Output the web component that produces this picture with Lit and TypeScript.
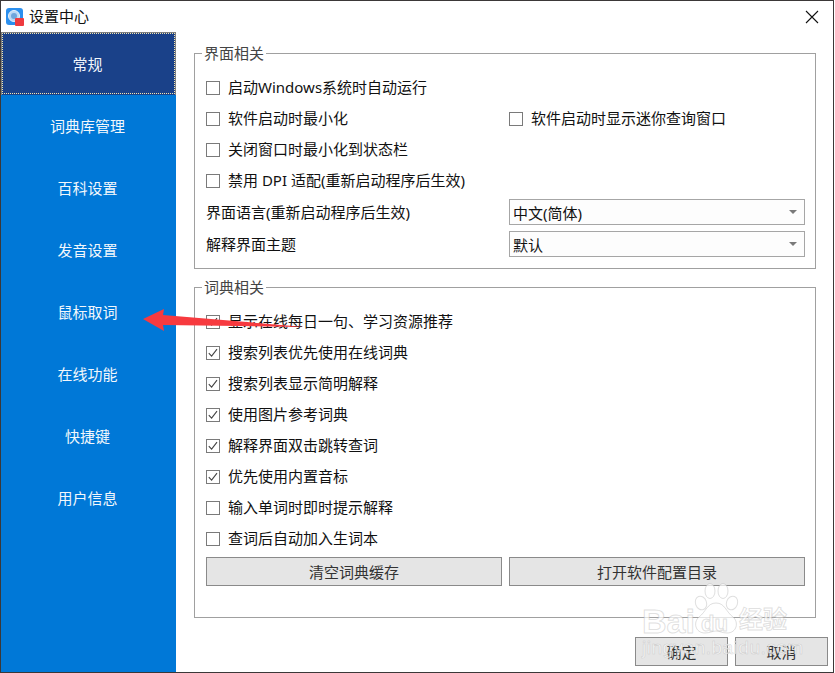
import { LitElement, html, css, svg } from "lit";
import { customElement } from "lit/decorators.js";

const NAV = ["常规", "词典库管理", "百科设置", "发音设置", "鼠标取词", "在线功能", "快捷键", "用户信息"];
const DICT: [string, boolean][] = [
  ["显示在线每日一句、学习资源推荐", true],
  ["搜索列表优先使用在线词典", true],
  ["搜索列表显示简明解释", true],
  ["使用图片参考词典", true],
  ["解释界面双击跳转查词", true],
  ["优先使用内置音标", true],
  ["输入单词时即时提示解释", false],
  ["查词后自动加入生词本", false],
];

@customElement("app-root")
export class AppRoot extends LitElement {
  static styles = css`
    :host { display: block; width: 835px; height: 673px; background: #fff;
      font-family: "Noto Sans", "Noto Sans CJK SC", sans-serif; font-size: 15px; color: #111; overflow: hidden; }
    .win { position: relative; box-sizing: border-box; width: 834px; height: 673px; border: 1px solid #3b3838;
      display: flex; flex-direction: column; background: #fff; }
    .title { height: 31px; flex: none; display: flex; align-items: center; gap: 5px; padding-left: 5px; }
    .title span { font-size: 15px; line-height: 20px; position: relative; top: -1px; }
    .close { margin-left: auto; margin-right: 14px; display: block; }
    .body { flex: 1; display: flex; min-height: 0; }
    .side { width: 175px; flex: none; background: #0078d7; display: flex; flex-direction: column; }
    .nav { height: 62px; display: flex; align-items: center; justify-content: center; color: #f2f7fc; box-sizing: border-box; flex: none; padding: 0 2px 2px 0; }
    .nav.on { height: 63px; background: #1a4189; border: 1px solid #7f7f7f; border-bottom: none; outline: 1px dotted #f5e6b0; outline-offset: -2px; }
    .main { flex: 1; padding: 11px 0 0 18px; display: flex; flex-direction: column; }
    fieldset { margin: 0; width: 622px; box-sizing: border-box; border: 1px solid #a0a0a0; padding: 8px 10px 9px 11px; min-inline-size: 0; }
    fieldset + fieldset { margin-top: 8px; padding-bottom: 31px; }
    legend { padding: 0 2px; margin-left: -4px; line-height: 20px; color: #444; font-size: 15px; }
    .grid { display: grid; grid-template-columns: 303px 296px; }
    .row { height: 31px; display: flex; align-items: center; gap: 8px; white-space: nowrap; }
    .row.tall { height: 32px; gap: 0; }
    .box { width: 14px; height: 14px; box-sizing: border-box; border: 1px solid #7a7a7a; background: #fff; flex: none; display: block; position: relative; top: 1px; }
    .select { width: 296px; height: 26px; box-sizing: border-box; border: 1px solid #a6a6a6; background: #fdfdfd;
      display: flex; align-items: center; padding: 0 3px; position: relative; top: 1px; }
    .caret { margin-left: auto; width: 0; height: 0; border: 4px solid transparent; border-top: 4px solid #7a7a7a; border-bottom: none; margin-right: 4px; }
    .btns { display: flex; gap: 7px; margin-top: 4px; }
    .btn { height: 29px; box-sizing: border-box; background: #e5e5e5; border: 1px solid #8a8a8a; display: flex; align-items: center; justify-content: center; color: #333; }
    .btns .btn { width: 296px; }
    .foot { display: flex; justify-content: flex-end; gap: 7px; margin-top: 19px; padding-right: 5px; }
    .foot .btn { width: 93px; }
    .arrow { position: absolute; left: 0; top: 0; pointer-events: none; }
    .mark { position: absolute; left: 640px; top: 575px; width: 160px; height: 80px; pointer-events: none; font-family: "Liberation Sans", sans-serif; }
    .mark svg { position: absolute; left: 51px; top: 7px; }
    .bd, .zh, .url { position: absolute; white-space: nowrap; color: rgba(255,255,255,.7); -webkit-text-stroke: 1px rgba(175,175,175,.4); }
    .bd { left: 1px; top: 27px; font-size: 34px; line-height: 36px; font-weight: 700; }
    .du { left: 60px; top: 36px; font-size: 22px; line-height: 24px; }
    .zh { left: 98px; top: 26px; font-size: 24px; line-height: 32px; font-family: "Noto Sans CJK SC", sans-serif; font-weight: 700; }
    .url { left: 1px; top: 63px; font-size: 19px; line-height: 18px; letter-spacing: .5px; -webkit-text-stroke: .6px rgba(175,175,175,.5); }
  `;

  private check(on: boolean) {
    return html`<svg class="box" viewBox="0 0 12 12" width="14" height="14">
      ${on ? svg`<path d="M1.8 6.2 4.6 9.2 10 2.2" fill="none" stroke="#444" stroke-width="1.1" />` : ""}
    </svg>`;
  }
  private row(t: string, on = false) {
    return html`<div class="row">${this.check(on)}<span>${t}</span></div>`;
  }

  render() {
    return html`<div class="win">
      <div class="title">
        <svg width="18" height="18" viewBox="0 0 18 18">
          <rect width="17" height="17" rx="3" fill="#2b8fee" />
          <circle cx="8" cy="8" r="5.5" fill="#b9d8f5" stroke="#e8f3fc" stroke-width="1" />
          <circle cx="8" cy="8" r="3" fill="#6ea6dc" />
          <rect x="9" y="10" width="9" height="8" rx="1" fill="#ee3a3f" />
        </svg>
        <span>设置中心</span>
        <svg class="close" width="14" height="14" viewBox="0 0 14 14"><path d="M1 1 13 13M13 1 1 13" stroke="#111" stroke-width="1.1" /></svg>
      </div>
      <div class="body">
        <div class="side">
          ${NAV.map((n, i) => html`<div class="nav ${i === 0 ? "on" : ""}">${n}</div>`)}
        </div>
        <div class="main">
          <fieldset>
            <legend>界面相关</legend>
            <div class="grid">
              ${this.row("启动Windows系统时自动运行")}<div></div>
              ${this.row("软件启动时最小化")}${this.row("软件启动时显示迷你查询窗口")}
              ${this.row("关闭窗口时最小化到状态栏")}<div></div>
              ${this.row("禁用 DPI 适配(重新启动程序后生效)")}<div></div>
              <div class="row tall">界面语言(重新启动程序后生效)</div>
              <div class="row tall"><div class="select">中文(简体)<i class="caret"></i></div></div>
              <div class="row tall">解释界面主题</div>
              <div class="row tall"><div class="select">默认<i class="caret"></i></div></div>
            </div>
          </fieldset>
          <fieldset>
            <legend>词典相关</legend>
            ${DICT.map(([t, on]) => this.row(t, on))}
            <div class="btns">
              <div class="btn">清空词典缓存</div>
              <div class="btn">打开软件配置目录</div>
            </div>
          </fieldset>
          <div class="foot">
            <div class="btn">确定</div>
            <div class="btn">取消</div>
          </div>
        </div>
      </div>
      <svg class="arrow" width="834" height="673" viewBox="1 1 834 673">
        <path d="M143 319 164 309 163 315 305 327 163 325 164 331Z" fill="#f73a3f" />
      </svg>
      <div class="mark">
        <svg width="48" height="52" viewBox="0 0 48 52" fill="rgba(255,255,255,.7)" stroke="rgba(175,175,175,.4)">
          <ellipse cx="9" cy="20" rx="5.5" ry="7" transform="rotate(-20 9 20)" />
          <ellipse cx="18" cy="8" rx="5" ry="7.5" />
          <ellipse cx="31" cy="8" rx="5" ry="7.5" />
          <ellipse cx="40" cy="20" rx="5.5" ry="7" transform="rotate(20 40 20)" />
          <path d="M24 20C15 20 14 29 7 34 1 39 3 50 13 50 18 50 20 48 24 48 28 48 30 50 35 50 45 50 47 39 41 34 34 29 33 20 24 20Z" />
        </svg>
        <div class="bd">Bai</div>
        <div class="bd du">du</div>
        <div class="zh">经验</div>
        <div class="url">jingyan.baidu.com</div>
      </div>
    </div>`;
  }
}
